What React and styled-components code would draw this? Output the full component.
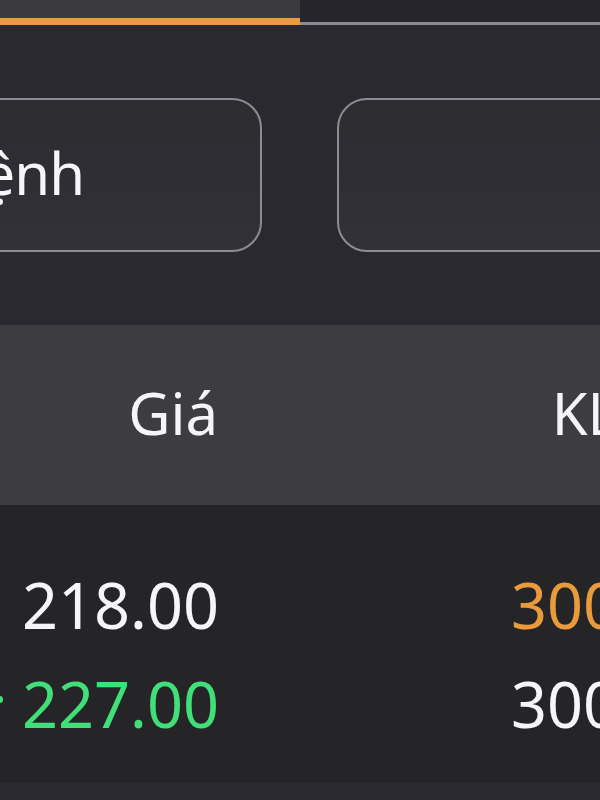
import React from "react";
import styled, { createGlobalStyle } from "styled-components";

const GlobalStyle = createGlobalStyle`
  html, body {
    margin: 0;
    padding: 0;
    background: #2a2930;
  }
  * {
    box-sizing: border-box;
  }
`;

const Screen = styled.div`
  width: 600px;
  height: 800px;
  overflow: hidden;
  display: flex;
  flex-direction: column;
  background: #2a2930;
  font-family: "Noto Sans", "Open Sans", sans-serif;
  color: #f4f4f6;
`;

const TabBar = styled.div`
  display: flex;
  height: 25px;
  flex-shrink: 0;
`;

const Tab = styled.div`
  flex: 1;
  background: ${(p) => (p.$active ? "#3b3a3f" : "#26252b")};
  border-bottom: ${(p) => (p.$active ? "7px solid #eb9b3c" : "3px solid #8b8a94")};
  align-self: stretch;
`;

const ActionRow = styled.div`
  display: flex;
  gap: 75px;
  margin-top: 73px;
  margin-left: -38px;
  height: 154px;
  flex-shrink: 0;
`;

const ActionButton = styled.button`
  flex: 0 0 300px;
  height: 100%;
  display: flex;
  align-items: center;
  justify-content: ${(p) => (p.$alignEnd ? "flex-end" : "center")};
  padding: 0 ${(p) => (p.$alignEnd ? "176px" : "0")} 6px 0;
  border: 2px solid #8d8c93;
  border-radius: 30px;
  background: linear-gradient(180deg, #2d2c30 0%, #323039 100%);
  color: #f6f6f8;
  font-family: inherit;
  font-size: 58px;
  letter-spacing: -1px;
  white-space: nowrap;
  overflow: hidden;
`;

const PriceTable = styled.div`
  margin-top: 73px;
  width: 619px;
  display: flex;
  flex-direction: column;
`;

const HeaderRow = styled.div`
  display: grid;
  grid-template-columns: 218px 400px;
  align-items: center;
  height: 180px;
  background: #3d3c41;
  font-size: 58px;
  color: #f5f5f7;
`;

const HeaderCell = styled.div`
  text-align: right;
  line-height: 1;
  padding-bottom: 4px;
`;

const Body = styled.div`
  background: #252528;
  padding: 50px 0 30px;
`;

const Row = styled.div`
  display: grid;
  grid-template-columns: 219px 400px;
  align-items: center;
  height: 99px;
  font-size: 63px;
`;

const Cell = styled.div`
  display: flex;
  align-items: center;
  justify-content: space-between;
  line-height: 1;
  color: ${(p) => p.$color || "#f6f6f8"};
`;

const Marker = styled.span`
  width: 7px;
  height: 7px;
  margin-left: -4px;
  margin-top: -8px;
  border-radius: 50%;
  background: ${(p) => p.$color};
  visibility: ${(p) => (p.$color ? "visible" : "hidden")};
`;

const Value = styled.span`
  margin-left: auto;
`;

const Footer = styled.div`
  flex: 1;
  background: #2b2931;
`;

const GREEN = "#41df78";
const ORANGE = "#e99a3b";

const rows = [
  { price: "218.00", priceColor: "#f6f6f8", qty: "300", qtyColor: ORANGE },
  { price: "227.00", priceColor: GREEN, qty: "300", qtyColor: "#f6f6f8", marker: GREEN },
];

const App = () => {
  return (
    <>
      <GlobalStyle />
      <Screen>
        <TabBar>
          <Tab $active />
          <Tab />
        </TabBar>
        <ActionRow>
          <ActionButton $alignEnd>Sổ lệnh</ActionButton>
          <ActionButton />
        </ActionRow>
        <PriceTable>
          <HeaderRow>
            <HeaderCell>Giá</HeaderCell>
            <HeaderCell>KL</HeaderCell>
          </HeaderRow>
          <Body>
            {rows.map((r) => (
              <Row key={r.price}>
                <Cell $color={r.priceColor}>
                  <Marker $color={r.marker} />
                  <Value>{r.price}</Value>
                </Cell>
                <Cell $color={r.qtyColor}>
                  <Value>{r.qty}</Value>
                </Cell>
              </Row>
            ))}
          </Body>
        </PriceTable>
        <Footer />
      </Screen>
    </>
  );
};

export default App;
